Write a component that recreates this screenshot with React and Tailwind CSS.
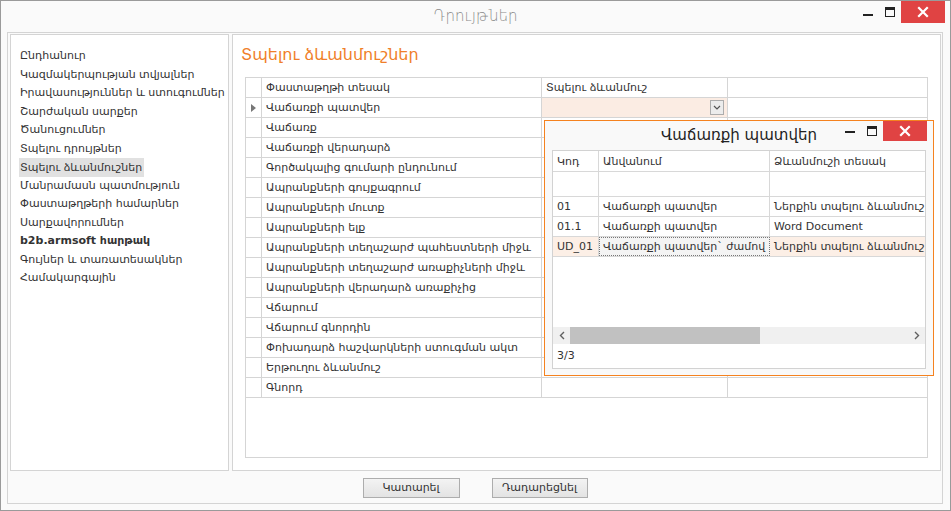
import React from 'react'

const MENU = [
  'Ընդհանուր',
  'Կազմակերպության տվյալներ',
  'Իրավասություններ և ստուգումներ',
  'Շարժական սարքեր',
  'Ծանուցումներ',
  'Տպելու դրույթներ',
  'Տպելու ձևանմուշներ',
  'Մանրամասն պատմություն',
  'Փաստաթղթերի համարներ',
  'Սարքավորումներ',
  'b2b.armsoft հարթակ',
  'Գույներ և տառատեսակներ',
  'Համակարգային',
]

const DOCS = [
  'Փաստաթղթի տեսակ',
  'Վաճառքի պատվեր',
  'Վաճառք',
  'Վաճառքի վերադարձ',
  'Գործակալից գումարի ընդունում',
  'Ապրանքների գույքագրում',
  'Ապրանքների մուտք',
  'Ապրանքների ելք',
  'Ապրանքների տեղաշարժ պահեստների միջև',
  'Ապրանքների տեղաշարժ առաքիչների միջև',
  'Ապրանքների վերադարձ առաքիչից',
  'Վճարում',
  'Վճարում գնորդին',
  'Փոխադարձ հաշվարկների ստուգման ակտ',
  'Երթուղու ձևանմուշ',
  'Գնորդ',
]

const TEMPLATES = [
  { code: '01', name: 'Վաճառքի պատվեր', kind: 'Ներքին տպելու ձևանմուշ' },
  { code: '01.1', name: 'Վաճառքի պատվեր', kind: 'Word Document' },
  { code: 'UD_01', name: 'Վաճառքի պատվեր` ժամով', kind: 'Ներքին տպելու ձևանմուշ', active: true },
]

function CloseX({ size = 12 }) {
  return (
    <svg width={size} height={size} viewBox="0 0 12 12">
      <path d="M2 2 L10 10 M10 2 L2 10" stroke="#fff" strokeWidth="2.2" strokeLinecap="square" />
    </svg>
  )
}

function WinControls({ big }) {
  return (
    <div className="flex items-start">
      <div className={big ? 'w-[10px] h-[2px] bg-[#222] mt-[13px] mr-[12px]' : 'w-[10px] h-[2px] bg-[#222] mt-[10px] mr-[12px]'} />
      <div className={big ? 'w-[10px] h-[10px] border border-[#222] border-t-[3px] mt-[6px] mr-[6px]' : 'w-[10px] h-[10px] border border-[#222] border-t-[3px] mt-[5px] mr-[6px]'} />
      <div className={big ? 'w-[44px] h-[22px] bg-[#e04343] flex items-center justify-center' : 'w-[44px] h-[20px] bg-[#e04343] flex items-center justify-center'}>
        <CloseX />
      </div>
    </div>
  )
}

function TemplatesPopup() {
  return (
    <div className="absolute left-[543px] top-[119px] w-[390px] h-[256px] border border-[#f5821f] bg-[#f9f9f9] flex flex-col">
      <div className="relative h-[29px] flex justify-center">
        <span className="text-[15px] leading-[28px] text-[#222]">Վաճառքի պատվեր</span>
        <div className="absolute right-[6px] top-0">
          <WinControls />
        </div>
      </div>
      <div className="mx-[7px] h-[219px] border border-[#d2d2d2] bg-white flex flex-col text-[11px] text-[#333]">
        <div className="flex h-[21px] border-b border-[#d8d8d8]">
          <div className="w-[46px] border-r border-[#d8d8d8] pl-[4px] leading-[21px]">Կոդ</div>
          <div className="w-[171px] border-r border-[#d8d8d8] pl-[4px] leading-[21px]">Անվանում</div>
          <div className="flex-1 pl-[4px] leading-[21px]">Ձևանմուշի տեսակ</div>
        </div>
        <div className="flex h-[25px] border-b border-[#d8d8d8]">
          <div className="w-[46px] border-r border-[#d8d8d8]" />
          <div className="w-[171px] border-r border-[#d8d8d8]" />
          <div className="flex-1" />
        </div>
        {TEMPLATES.map((t) => (
          <div key={t.code} className={t.active ? 'flex h-[20px] border-b border-[#d8d8d8] bg-[#fcefe6]' : 'flex h-[20px] border-b border-[#d8d8d8]'}>
            <div className="w-[46px] border-r border-[#d8d8d8] pl-[4px] leading-[19px]">{t.code}</div>
            {t.active ? (
              <div className="w-[171px] border border-dotted border-[#777] bg-[#f4f4f4] pl-[3px] leading-[17px] whitespace-nowrap overflow-hidden">{t.name}</div>
            ) : (
              <div className="w-[171px] border-r border-[#d8d8d8] pl-[4px] leading-[19px] whitespace-nowrap overflow-hidden">{t.name}</div>
            )}
            <div className="flex-1 pl-[4px] leading-[19px] whitespace-nowrap overflow-hidden">{t.kind}</div>
          </div>
        ))}
        <div className="flex-1" />
        <div className="h-[17px] bg-[#f0f0f0] flex items-center">
          <div className="w-[17px] flex justify-center">
            <svg width="6" height="9" viewBox="0 0 6 9"><path d="M5 1 L1.5 4.5 L5 8" stroke="#606060" strokeWidth="1.4" fill="none" /></svg>
          </div>
          <div className="w-[190px] h-[17px] bg-[#c1c1c1]" />
          <div className="flex-1" />
          <div className="w-[17px] flex justify-center">
            <svg width="6" height="9" viewBox="0 0 6 9"><path d="M1 1 L4.5 4.5 L1 8" stroke="#606060" strokeWidth="1.4" fill="none" /></svg>
          </div>
        </div>
        <div className="h-[24px] pl-[4px] leading-[24px]">3/3</div>
      </div>
    </div>
  )
}

export default function App() {
  return (
    <div className="relative w-[951px] h-[511px] bg-[#fafafa] border border-[#9a9a9a] font-['DejaVu_Sans',sans-serif] text-[#333] overflow-hidden">
      {/* title bar */}
      <div className="relative h-[31px] flex justify-center">
        <span className="text-[15px] leading-[30px] text-[#8a8a8a] font-light">Դրույթներ</span>
        <div className="absolute right-[5px] top-0">
          <WinControls big />
        </div>
      </div>

      <div className="ml-[6px] mr-[7px] h-[472px] border border-[#d4d4d4] flex flex-col">
        <div className="flex gap-[3px] pl-[2px] pt-[1px] pr-[1px]">
          {/* left menu */}
          <div className="w-[219px] h-[437px] border border-[#d4d4d4] bg-white pt-[12px] pl-[9px] text-[11px] whitespace-nowrap">
            {MENU.map((m) => (
              <div key={m} className="h-[18.5px] flex items-center">
                <span className={
                  m === 'Տպելու ձևանմուշներ'
                    ? 'bg-[#e1e1e1] pl-[1px] pr-[2px] -ml-[1px] leading-[19px]'
                    : m.startsWith('b2b')
                      ? 'font-bold text-[#333]'
                      : ''
                }>{m}</span>
              </div>
            ))}
          </div>

          {/* right content */}
          <div className="flex-1 h-[437px] border border-[#d4d4d4] bg-white pl-[12px] pr-[12px]">
            <div className="h-[42px] flex items-center">
              <span className="-ml-[4px] mt-[-2px] text-[16px] text-[#f07f2a]">Տպելու ձևանմուշներ</span>
            </div>
            <div className="w-[683px] h-[381px] border border-[#d5d5d5] text-[11px]">
              {DOCS.map((d, i) => (
                <div key={d} className="flex h-[20px] border-b border-[#d5d5d5]">
                  <div className="w-[16px] border-r border-[#d5d5d5] flex items-center justify-center">
                    {i === 1 && (
                      <svg width="5" height="8" viewBox="0 0 5 8"><path d="M0 0 L5 4 L0 8 Z" fill="#777" /></svg>
                    )}
                  </div>
                  <div className="w-[280px] border-r border-[#d5d5d5] pl-[4px] leading-[19px] whitespace-nowrap">{d}</div>
                  <div className={i === 1 ? 'w-[186px] border-r border-[#d5d5d5] bg-[#fbece3] flex justify-end items-center pr-[3px]' : 'w-[186px] border-r border-[#d5d5d5] pl-[4px] leading-[19px]'}>
                    {i === 0 && 'Տպելու ձևանմուշ'}
                    {i === 1 && (
                      <div className="w-[14px] h-[15px] border border-[#acacac] bg-[#ececec] flex items-center justify-center">
                        <svg width="8" height="5" viewBox="0 0 8 5"><path d="M1 1 L4 4 L7 1" stroke="#555" strokeWidth="1.2" fill="none" /></svg>
                      </div>
                    )}
                  </div>
                  <div className="flex-1" />
                </div>
              ))}
            </div>
          </div>
        </div>

        {/* buttons */}
        <div className="flex justify-center gap-[32px] mt-[7px]">
          <button className="w-[97px] h-[20px] border border-[#adadad] bg-gradient-to-b from-[#f3f3f3] to-[#e3e3e3] text-[11px] leading-[18px] text-[#333]">Կատարել</button>
          <button className="w-[96px] h-[20px] border border-[#adadad] bg-gradient-to-b from-[#f3f3f3] to-[#e3e3e3] text-[11px] leading-[18px] text-[#333]">Դադարեցնել</button>
        </div>
      </div>

      <TemplatesPopup />
    </div>
  )
}
